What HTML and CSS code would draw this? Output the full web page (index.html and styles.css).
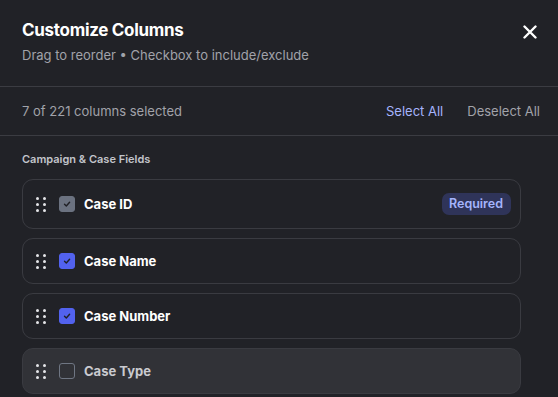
FILE: index.html
```html
<!DOCTYPE html>
<html lang="en">
<head>
    <meta charset="UTF-8">
    <meta name="viewport" content="width=device-width, initial-scale=1.0">
    <title>Customize Columns</title>
    <link rel="stylesheet" href="styles.css">
</head>
<body>

<div class="modal">
    <!-- Cabecera -->
    <div class="modal-header">
        <div>
            <h2>Customize Columns</h2>
            <p class="subtitle">Drag to reorder • Checkbox to include/exclude</p>
        </div>
        <button class="close-btn" aria-label="Close">
            <svg width="14" height="14" viewBox="0 0 14 14">
                <path d="M1.5 1.5 L12.5 12.5 M12.5 1.5 L1.5 12.5" stroke="#fff" stroke-width="2.4" stroke-linecap="round"/>
            </svg>
        </button>
    </div>

    <!-- Barra de selección -->
    <div class="toolbar">
        <span class="count">7 of 221 columns selected</span>
        <div class="actions">
            <a href="#" class="select-all">Select All</a>
            <a href="#" class="deselect-all">Deselect All</a>
        </div>
    </div>

    <!-- Lista de columnas -->
    <div class="group">
        <h4>Campaign &amp; Case Fields</h4>

        <div class="column-row first">
            <span class="handle"><i></i><i></i><i></i><i></i><i></i><i></i></span>
            <span class="checkbox locked">
                <svg width="10" height="10" viewBox="0 0 10 10"><path d="M2.5 5.2 L4.3 7 L7.6 3.2" fill="none" stroke="#1f2025" stroke-width="1.4" stroke-linecap="round" stroke-linejoin="round"/></svg>
            </span>
            <span class="label">Case ID</span>
            <span class="badge">Required</span>
        </div>

        <div class="column-row">
            <span class="handle"><i></i><i></i><i></i><i></i><i></i><i></i></span>
            <span class="checkbox checked">
                <svg width="10" height="10" viewBox="0 0 10 10"><path d="M2.5 5.2 L4.3 7 L7.6 3.2" fill="none" stroke="#1f2025" stroke-width="1.4" stroke-linecap="round" stroke-linejoin="round"/></svg>
            </span>
            <span class="label">Case Name</span>
        </div>

        <div class="column-row">
            <span class="handle"><i></i><i></i><i></i><i></i><i></i><i></i></span>
            <span class="checkbox checked">
                <svg width="10" height="10" viewBox="0 0 10 10"><path d="M2.5 5.2 L4.3 7 L7.6 3.2" fill="none" stroke="#1f2025" stroke-width="1.4" stroke-linecap="round" stroke-linejoin="round"/></svg>
            </span>
            <span class="label">Case Number</span>
        </div>

        <div class="column-row hover">
            <span class="handle"><i></i><i></i><i></i><i></i><i></i><i></i></span>
            <span class="checkbox"></span>
            <span class="label muted">Case Type</span>
        </div>
    </div>
</div>

</body>
</html>
```

FILE: styles.css
```css
body {
    font-family: 'Inter', 'Noto Sans', sans-serif;
    margin: 0;
    padding: 0;
    background-color: #212227;
    color: #fff;
    overflow: hidden;
}

.modal {
    width: 558px;
    height: 397px;
    background-color: #212227;
}

.modal-header {
    display: flex;
    justify-content: space-between;
    align-items: flex-start;
    padding: 19px 18px 0 22px;
    height: 67px;
    border-bottom: 1px solid #3b3c42;
}

.modal-header h2 {
    margin: 0;
    font-size: 17px;
    font-weight: 700;
    line-height: 22px;
    letter-spacing: -0.3px;
}

.subtitle {
    margin: 6px 0 0;
    font-size: 13px;
    color: #a1a3aa;
    line-height: 16px;
}

.close-btn {
    background: none;
    border: none;
    padding: 0;
    margin-top: 3px;
    width: 20px;
    height: 20px;
    display: flex;
    align-items: center;
    justify-content: center;
    cursor: pointer;
}

.toolbar {
    display: flex;
    justify-content: space-between;
    align-items: center;
    height: 48px;
    padding: 0 18px 0 22px;
    border-bottom: 1px solid #3b3c42;
    font-size: 13px;
}

.count {
    color: #a1a3aa;
}

.actions {
    display: flex;
    gap: 24px;
}

.actions a {
    text-decoration: none;
}

.select-all {
    color: #a5b4fc;
}

.deselect-all {
    color: #a1a3aa;
}

.group {
    padding: 0 37px 0 22px;
}

.group h4 {
    margin: 16px 0 13px;
    font-size: 11px;
    font-weight: 600;
    color: #c3c5cb;
    line-height: 14px;
}

.column-row {
    display: flex;
    align-items: center;
    height: 44px;
    padding: 0 9px 0 13px;
    margin-bottom: 9px;
    border: 1px solid #3a3b41;
    border-radius: 11px;
}

.column-row.first {
    height: 48px;
}

.column-row.hover {
    background-color: #313237;
}

.handle {
    display: grid;
    grid-template-columns: 3px 3px;
    grid-template-rows: 3px 3px 3px;
    column-gap: 4px;
    row-gap: 3px;
    margin-right: 13px;
}

.handle i {
    display: block;
    width: 3px;
    height: 3px;
    border-radius: 50%;
    background-color: #e4e5e8;
}

.checkbox {
    width: 14px;
    height: 14px;
    border: 1px solid #6f7683;
    border-radius: 3px;
    display: flex;
    align-items: center;
    justify-content: center;
    margin-right: 9px;
}

.checkbox.locked {
    background-color: #6b7280;
    border-color: #6b7280;
}

.checkbox.checked {
    background-color: #5262ee;
    border-color: #5262ee;
}

.label {
    font-size: 13px;
    font-weight: 700;
    flex: 1;
}

.label.muted {
    color: #c9cacf;
}

.badge {
    background-color: #2f3459;
    color: #a5b4fc;
    font-size: 12.5px;
    font-weight: 600;
    padding: 3px 8px 3px 7px;
    border-radius: 7px;
    line-height: 16px;
}
```
